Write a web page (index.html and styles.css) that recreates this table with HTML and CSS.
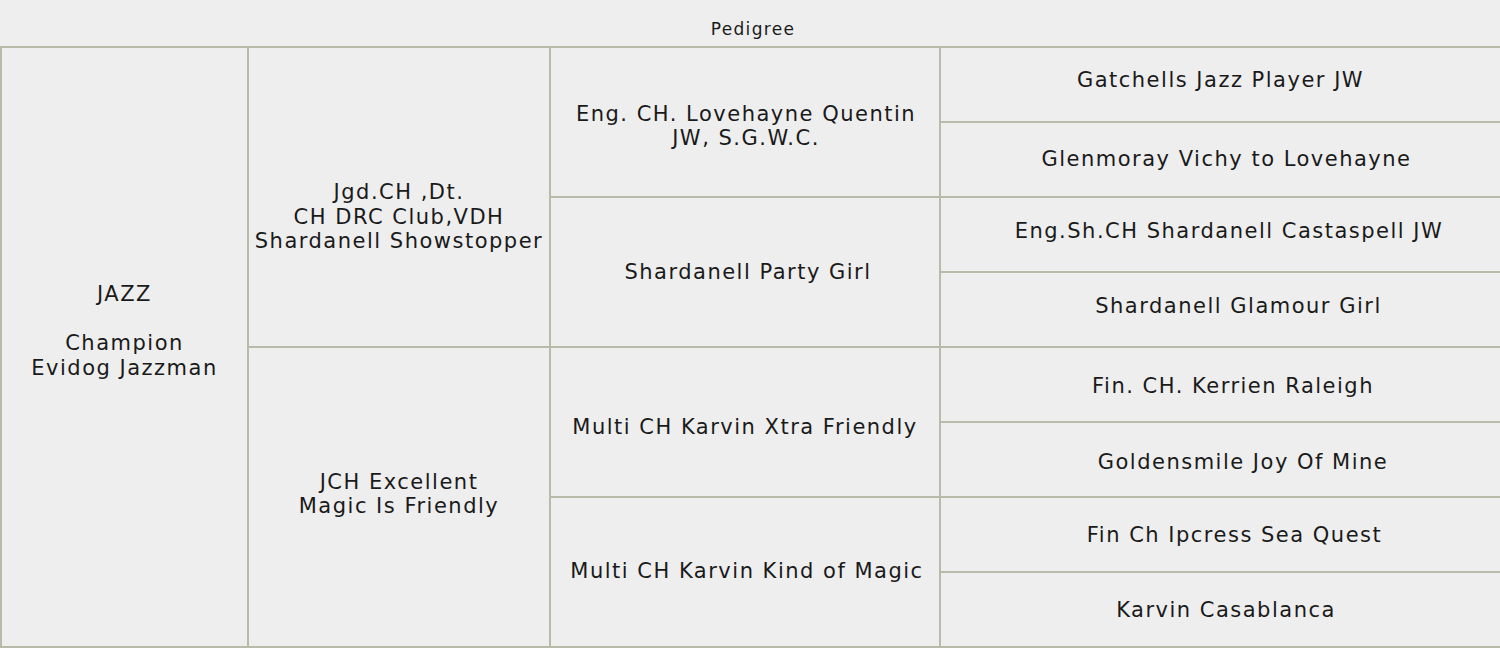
FILE: index.html
```html
<!DOCTYPE html>
<html>
<head>
<meta charset="utf-8">
<link rel="stylesheet" href="styles.css">
</head>
<body>
<div class="title">Pedigree</div>
<table class="ped">
<colgroup><col class="c1"><col class="c2"><col class="c3"><col class="c4"></colgroup>
<tr>
<td rowspan="8" class="g1">JAZZ<br><br>Champion<br>Evidog Jazzman</td>
<td rowspan="4" class="g2a">Jgd.CH ,Dt.<br>CH DRC Club,VDH<br>Shardanell Showstopper</td>
<td rowspan="2" class="g3a">Eng. CH. Lovehayne Quentin<br>JW, S.G.W.C.</td>
<td class="r1">Gatchells Jazz Player JW</td>
</tr>
<tr><td class="r2">Glenmoray Vichy to Lovehayne</td></tr>
<tr>
<td rowspan="2" class="g3b">Shardanell Party Girl</td>
<td class="r3">Eng.Sh.CH Shardanell Castaspell JW</td>
</tr>
<tr><td class="r4">Shardanell Glamour Girl</td></tr>
<tr>
<td rowspan="4" class="g2b">JCH Excellent<br>Magic Is Friendly</td>
<td rowspan="2" class="g3c">Multi CH Karvin Xtra Friendly</td>
<td class="r5">Fin. CH. Kerrien Raleigh</td>
</tr>
<tr><td class="r6">Goldensmile Joy Of Mine</td></tr>
<tr>
<td rowspan="2" class="g3d">Multi CH Karvin Kind of Magic</td>
<td class="r7">Fin Ch Ipcress Sea Quest</td>
</tr>
<tr><td class="r8">Karvin Casablanca</td></tr>
</table>
</body>
</html>
```
FILE: styles.css
```css
html, body {
  margin: 0;
  padding: 0;
  background: #eeeeee;
}
body {
  font-family: "DejaVu Sans", sans-serif;
  color: #1a1a1a;
  width: 1500px;
}
.title {
  height: 46px;
  box-sizing: border-box;
  padding-top: 18px;
  text-align: center;
  font-size: 17px;
  letter-spacing: 1.3px;
  line-height: 22px;
  padding-left: 6px;
}
.ped {
  border-collapse: collapse;
  width: 1500px;
  table-layout: fixed;
  font-size: 21px;
  letter-spacing: 1.5px;
  line-height: 24.5px;
}
.c1 { width: 247px; }
.c2 { width: 302px; }
.c3 { width: 390px; }
.c4 { width: 561px; }
.ped tr { height: 75px; }
.ped td {
  border: 2px solid #b9bbaa;
  padding: 0;
  text-align: center;
  vertical-align: middle;
}
.ped .g1 { padding-bottom: 32px; }
.ped .g2a { padding-top: 40px; }
.ped .g2b { padding-bottom: 6px; }
.ped .g3a { padding-top: 8px; padding-left: 2px; }
.ped .g3b { padding-left: 6px; }
.ped .g3c { padding-top: 10px; }
.ped .g3d { padding-bottom: 2px; padding-left: 4px; }
.ped .r1 { padding-bottom: 8px; }
.ped .r2 { padding-left: 12px; }
.ped .r3 { padding-left: 17px; padding-bottom: 6px; }
.ped .r4 { padding-left: 36px; padding-bottom: 6px; }
.ped .r5 { padding-left: 25px; padding-top: 4px; }
.ped .r6 { padding-left: 45px; padding-top: 6px; }
.ped .r7 { padding-left: 28px; padding-top: 2px; }
.ped .r8 { padding-left: 11px; padding-top: 2px; }
```
